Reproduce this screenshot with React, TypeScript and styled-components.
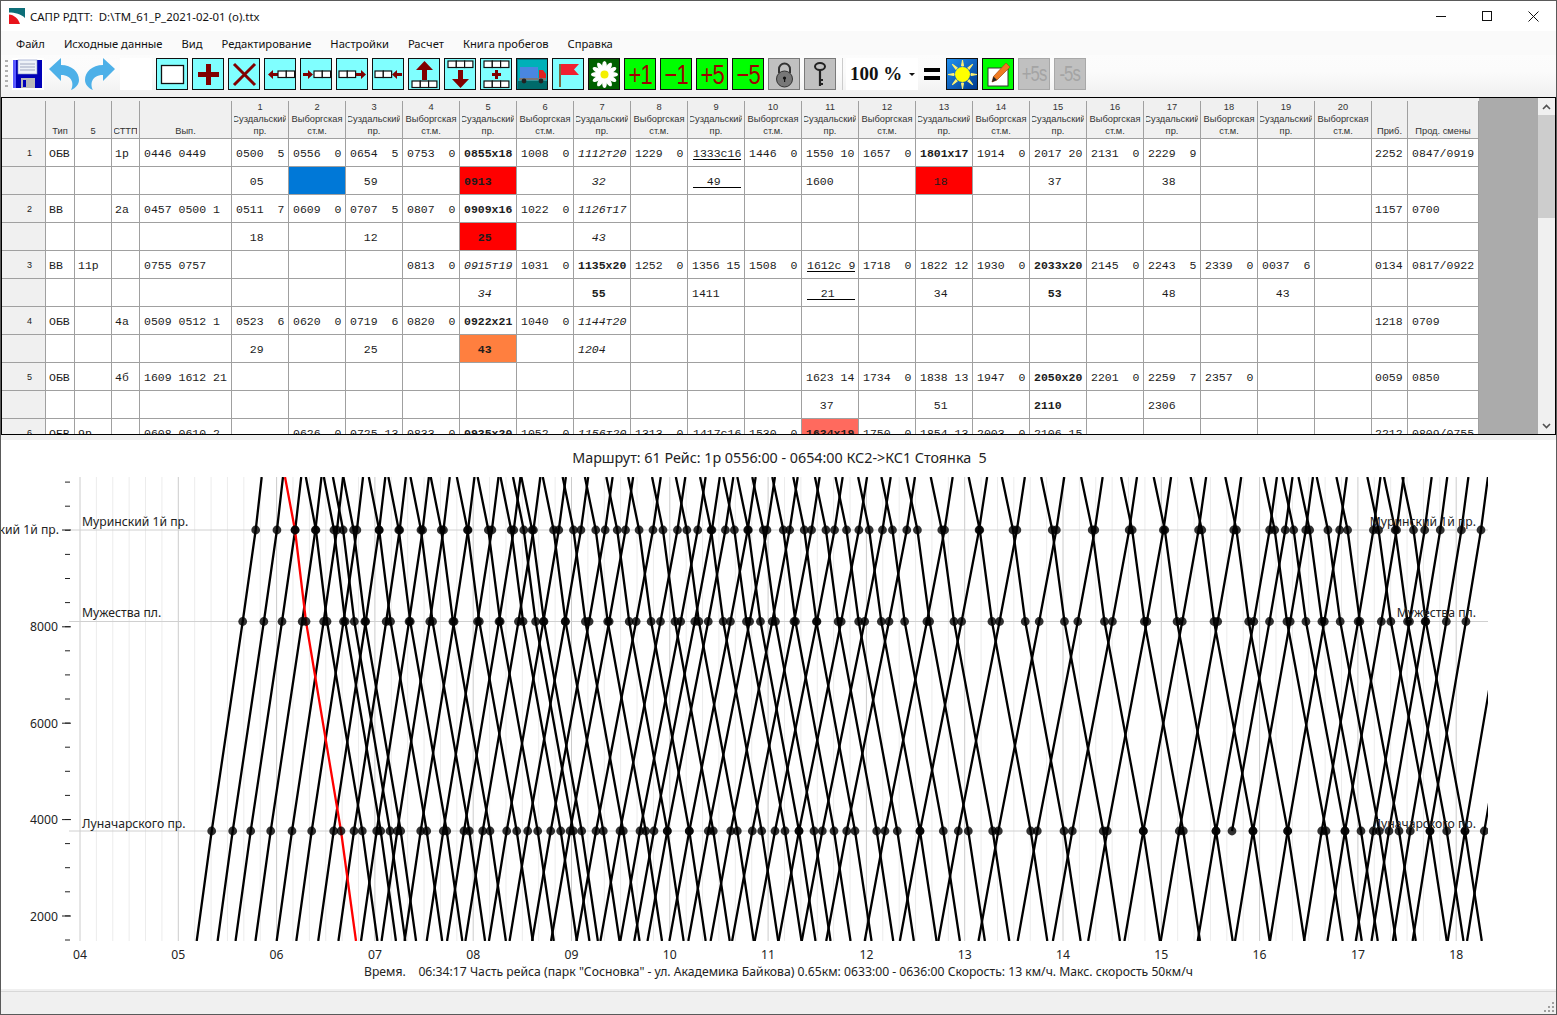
import React from 'react';
import styled, { createGlobalStyle } from 'styled-components';

const Global = createGlobalStyle`
  html, body { margin: 0; padding: 0; background: #fff; overflow: hidden; }
  * { box-sizing: border-box; }
`;
const UI = `"Noto Sans", "Open Sans", sans-serif`;
const Root = styled.div`
  width: 1557px; height: 1015px; border: 1px solid #5a5a5a; display: flex; flex-direction: column;
  background: #fff; font-family: ${UI}; overflow: hidden; color: #111;
`;
const TitleBar = styled.div`height: 30px; display: flex; align-items: center; padding-left: 8px; flex: none; background: #fff;`;
const TitleText = styled.span`font-size: 11.4px; margin-left: 5px; white-space: pre; flex: 1;`;
const WinBtn = styled.div`width: 46px; height: 30px; display: flex; align-items: center; justify-content: center;`;
const MenuBar = styled.div`height: 24px; flex: none; background: #fafafa; display: flex; align-items: center; padding-left: 15px; gap: 19px; font-size: 11.2px;`;
const MenuItem = styled.span`white-space: nowrap;`;
const Toolbar = styled.div`
  height: 42px; flex: none; display: flex; align-items: flex-start; padding: 3px 0 0 4px; gap: 4px;
  background: linear-gradient(#fcfcfc, #fbfbfb 40%, #f0f0f0);
`;
const Grip = styled.div`width: 3px; height: 28px; margin: 2px 0 0 0; background: repeating-linear-gradient(#b0b0b0 0 2px, transparent 2px 5px);`;
const Slot = styled.div<{ $white?: boolean }>`width: 32px; height: 32px; flex: none; background: ${p => (p.$white ? '#fff' : 'transparent')}; display: flex;`;
const ToolBtn = styled.div<{ $bg?: string; $edge?: string; $fg?: string }>`
  width: 32px; height: 32px; flex: none; border: 1.5px solid ${p => p.$edge || '#111'}; background: ${p => p.$bg || '#80ffff'};
  display: flex; align-items: center; justify-content: center; overflow: hidden; color: ${p => p.$fg || '#a00000'};
  font-family: "Liberation Sans", sans-serif;
`;
const BtnLabel = styled.span<{ $size?: number }>`font-size: ${p => p.$size || 25}px; letter-spacing: -1px; display: block; transform: scale(.88, 1.12); white-space: nowrap;`;
const Divider = styled.div`width: 1px; height: 32px; background: #ccc; margin-left: 2px;`;
const Combo = styled.div`
  width: 72px; height: 32px; margin-left: -1px; background: #fff; display: flex; align-items: center; justify-content: space-between; padding: 0 3px 0 4px;
  font: bold 19px "Liberation Serif", serif;
`;
const ComboArrow = styled.span`width: 0; height: 0; border: 3px solid transparent; border-top: 3px solid #111; margin-top: 3px;`;
const EqualSign = styled.div`width: 20px; height: 32px; display: flex; flex-direction: column; justify-content: center; gap: 4px; padding: 0 2px;`;
const EqualBar = styled.div`height: 4px; background: #000;`;
const Frame = styled.div`height: 338px; flex: none; border: 1px solid #000; display: flex; overflow: hidden;`;
const Grid = styled.div`
  flex: 1; height: 336px; background: #ababab; overflow: hidden; display: grid; align-content: start;
  grid-template-columns: 44px 29px 37px 28px 92px repeat(20, 57px) 36px 71px 59px;
  grid-auto-rows: 28px; grid-template-rows: 41px;
`;
const Head = styled.div`
  background: linear-gradient(#a0a0a0, #a0a0a0) no-repeat right bottom / 1px calc(100% - 3px), #f0f0f0;
  border-bottom: 1px solid #a0a0a0; overflow: hidden; padding: 0 3px 1px 2px;
  display: flex; flex-direction: column; justify-content: flex-end; align-items: center;
  font: 9.3px/12px "Liberation Sans", sans-serif; color: #333;
`;
const HeadLine = styled.span`white-space: nowrap; display: flex; justify-content: center; width: 100%; overflow: hidden;`;
const Fill = styled.div`background: #ababab;`;
const RowNo = styled.div`background: #f0f0f0; border-right: 1px solid #a0a0a0; border-bottom: 1px solid #a0a0a0; font: 9px/27px "Liberation Sans", sans-serif; padding: 1px 0 0 25px; color: #222;`;
const Cell = styled.div<{ $bg?: string; $b?: boolean; $i?: boolean; $tight?: boolean }>`
  background: ${p => p.$bg || '#fff'}; border-right: 1px solid #a0a0a0; border-bottom: 1px solid #a0a0a0;
  padding: 1px 0 0 ${p => (p.$tight ? 3 : 4)}px; font-family: "Liberation Mono", monospace; font-size: 11.5px; line-height: 27px; white-space: pre; overflow: hidden;
  font-weight: ${p => (p.$b ? 700 : 400)}; font-style: ${p => (p.$i ? 'italic' : 'normal')}; color: #1c1c1c;
`;
const Under = styled.span`display: block; width: 48px; height: 20px; line-height: 27px; margin-left: 1px; border-bottom: 1px solid #000;`;
const ScrollBar = styled.div`width: 17px; flex: none; background: #f0f0f0; display: flex; flex-direction: column;`;
const ScrollEnd = styled.div`height: 17px; flex: none; display: flex; align-items: center; justify-content: center;`;
const ScrollThumb = styled.div`height: 103px; flex: none; background: #cdcdcd;`;
const ScrollTrack = styled.div`flex: 1;`;
const Splitter = styled.div`height: 5px; flex: none; background: #f0f0f0;`;
const ChartPanel = styled.div`flex: 1; min-height: 0; display: flex; flex-direction: column; background: #fff;`;
const ChartTitle = styled.div`height: 30px; flex: none; padding: 8px 0 0 2px; text-align: center; font-size: 14.3px; line-height: 20px; color: #222; white-space: pre;`;
const ChartSvg = styled.svg`display: block; flex: none;`;
const ChartInfo = styled.div`height: 19px; flex: none; padding: 1px 0 0 363px; font-size: 12.2px; line-height: 18px; white-space: pre; color: #222;`;
const StatusBar = styled.div`height: 23px; flex: none; background: #f0f0f0; border-top: 1px solid #d8d8d8; margin-top: 2px; display: flex; justify-content: flex-end; align-items: flex-end; padding: 0 1px 1px 0; box-shadow: 0 -2px 0 #f0f0f0;`;

type V = string | { t?: string; b?: boolean; i?: boolean; u?: boolean; bg?: string };
const B = (t: string, bg?: string): V => ({ t, b: true, bg });
const I = (t: string): V => ({ t, i: true });
const U = (t: string): V => ({ t, u: true });
const RED = '#ff0000'; const SALMON = '#ff6a5e'; const ORANGE = '#ff7f3f'; const BLUE = '#0078d7';

interface Row { n?: number; type?: string; five?: string; sttp?: string; vyp?: string; c: Record<number, V>; prib?: string; prod?: string }
const rows: Row[] = [
  { n: 1, type: 'ОБВ', sttp: '1р', vyp: '0446 0449', prib: '2252', prod: '0847/0919', c: { 1: '0500  5', 2: '0556  0', 3: '0654  5', 4: '0753  0', 5: B('0855x18'), 6: '1008  0', 7: I('1112т20'), 8: '1229  0', 9: U('1333с16'), 10: '1446  0', 11: '1550 10', 12: '1657  0', 13: B('1801x17'), 14: '1914  0', 15: '2017 20', 16: '2131  0', 17: '2229  9' } },
  { c: { 1: '  05', 2: { bg: BLUE }, 3: '  59', 5: B('0913', RED), 7: I('  32'), 9: U('  49'), 11: '1600', 13: { t: '  18', bg: RED }, 15: '  37', 17: '  38' } },
  { n: 2, type: 'ВВ', sttp: '2а', vyp: '0457 0500 1', prib: '1157', prod: '0700', c: { 1: '0511  7', 2: '0609  0', 3: '0707  5', 4: '0807  0', 5: B('0909x16'), 6: '1022  0', 7: I('1126т17') } },
  { c: { 1: '  18', 3: '  12', 5: B('  25', RED), 7: I('  43') } },
  { n: 3, type: 'ВВ', five: '11р', vyp: '0755 0757', prib: '0134', prod: '0817/0922', c: { 4: '0813  0', 5: I('0915т19'), 6: '1031  0', 7: B('1135x20'), 8: '1252  0', 9: '1356 15', 10: '1508  0', 11: U('1612с 9'), 12: '1718  0', 13: '1822 12', 14: '1930  0', 15: B('2033x20'), 16: '2145  0', 17: '2243  5', 18: '2339  0', 19: '0037  6' } },
  { c: { 5: I('  34'), 7: B('  55'), 9: '1411', 11: U('  21'), 13: '  34', 15: B('  53'), 17: '  48', 19: '  43' } },
  { n: 4, type: 'ОБВ', sttp: '4а', vyp: '0509 0512 1', prib: '1218', prod: '0709', c: { 1: '0523  6', 2: '0620  0', 3: '0719  6', 4: '0820  0', 5: B('0922x21'), 6: '1040  0', 7: I('1144т20') } },
  { c: { 1: '  29', 3: '  25', 5: B('  43', ORANGE), 7: I('1204') } },
  { n: 5, type: 'ОБВ', sttp: '4б', vyp: '1609 1612 21', prib: '0059', prod: '0850', c: { 11: '1623 14', 12: '1734  0', 13: '1838 13', 14: '1947  0', 15: B('2050x20'), 16: '2201  0', 17: '2259  7', 18: '2357  0' } },
  { c: { 11: '  37', 13: '  51', 15: B('2110'), 17: '2306' } },
  { n: 6, type: 'ОБВ', five: '9р', vyp: '0608 0610 2', prib: '2212', prod: '0809/0755', c: { 2: '0626  0', 3: '0725 13', 4: '0833  0', 5: B('0935x20'), 6: '1052  0', 7: I('1156т20'), 8: '1313  0', 9: U('1417с16'), 10: '1530  0', 11: B('1634x19', SALMON), 12: '1750  0', 13: '1854 13', 14: '2003  0', 15: '2106 15' } },
];
const cols20 = Array.from({ length: 20 }, (_, i) => i + 1);

const renderValue = (v: V | undefined, key: string) => {
  if (v === undefined) return <Cell key={key} />;
  if (typeof v === 'string') return <Cell key={key}>{v}</Cell>;
  return <Cell key={key} $bg={v.bg} $b={v.b} $i={v.i}>{v.u ? <Under>{v.t}</Under> : v.t}</Cell>;
};

const Cells = ({ x, y, n = 3 }: { x: number; y: number; n?: number }) => (
  <g>{Array.from({ length: n }, (_, i) => <rect key={i} x={x + i * 8.3} y={y} width={8.3} height={6.5} fill="#fff" stroke="#111" strokeWidth="1.2" />)}</g>
);
const DR = '#800000';
const Ic = ({ children }: { children: React.ReactNode }) => <svg width="29" height="29" viewBox="0 0 29 29">{children}</svg>;
const HArrow = ({ x, dir }: { x: number; dir: 1 | -1 }) => (
  <path fill={DR} d={dir === 1 ? `M${x} 13h5v-3l5 4.5-5 4.5v-3h-5z` : `M${x + 10} 13h-5v-3l-5 4.5 5 4.5v-3h5z`} />
);

const chevronUp = <svg width="9" height="6" viewBox="0 0 9 6"><path d="M1 5 L4.5 1.5 L8 5" fill="none" stroke="#505050" strokeWidth="1.6" /></svg>;
const chevronDown = <svg width="9" height="6" viewBox="0 0 9 6"><path d="M1 1 L4.5 4.5 L8 1" fill="none" stroke="#505050" strokeWidth="1.6" /></svg>;

// x position where each trip crosses Луначарского пр.
const UP = [211.7, 232.7, 250.7, 270.7, 292, 311.7, 333.7, 354, 376.7, 397.3, 420.7, 443.3, 464, 482.7, 506.7, 527.7, 550.7, 570, 596, 620, 640, 654, 667.3, 689.3, 708.3, 730.7, 752.3, 775, 799, 822.3, 846.7, 885, 920, 958.3, 998.3, 1037.3, 1072.3, 1107.3, 1143.3, 1179.3, 1216, 1253, 1287.7, 1321.7, 1345, 1373.3, 1389, 1410.3, 1430, 1465, 1484.3];
const DOWN = [362.3, 380.7, 390, 400.7, 426.7, 446.7, 469.3, 490, 516.7, 537.7, 560.7, 573.3, 581.7, 603.3, 623.3, 645.7, 667.3, 689.3, 713.3, 737.3, 761.7, 785, 799, 814, 834, 855, 876.7, 897.3, 920, 943.3, 968.3, 992.7, 1030.7, 1064, 1103.3, 1143.3, 1183.3, 1216, 1253, 1287.7, 1326, 1345, 1361, 1379.3, 1399, 1430, 1446.7, 1465];
const RED_TRIP = 341;
const DEPOT_TRIP = 1232;
const STATIONS = [530, 621.5, 831];
type Shape = [number, number][];
const upShape: Shape = [[477, 50], [530, 44], [621.5, 31], [831, 0], [941, -15]];
const downShape: Shape = [[477, -56], [530, -46], [621.5, -35], [831, 0], [941, 15]];
// trips take longer during the day, so their lines lean more
const upLean: Shape = [[212, 1], [400, 1.05], [600, 1.3], [830, 1.37], [1060, 1.3], [1290, 1.18], [1488, 1.15]];
const downLean: Shape = [[341, 1], [520, 1.07], [760, 1.1], [1488, 1.12]];
const lean = (x: number, t: Shape) => {
  for (let i = 1; i < t.length; i++) {
    if (x <= t[i][0]) return t[i - 1][1] + ((x - t[i - 1][0]) / (t[i][0] - t[i - 1][0])) * (t[i][1] - t[i - 1][1]);
  }
  return t[t.length - 1][1];
};
const pts = (x: number, s: Shape, t: Shape) => s.map(([y, d]) => `${x + d * lean(x, t)},${y}`).join(' ');
const stopX = (x: number, s: Shape, t: Shape, y: number) => x + (s.find(p => p[0] === y) as [number, number])[1] * lean(x, t);

const hours = Array.from({ length: 15 }, (_, i) => i);
const hx = (h: number) => 80 + h * 98.3;
const minor = Array.from({ length: 85 }, (_, i) => 80 + (i * 98.3) / 6).filter((_, i) => i % 6 !== 0 && 80 + (i * 98.3) / 6 <= 1488);
const ticks = Array.from({ length: 20 }, (_, i) => 940 - i * 24.1);
const DOT = { r: 4.4, fill: '#000', fillOpacity: 0.8 };

const Chart = () => (
  <ChartSvg width={1555} height={492} viewBox="1 470 1555 492">
    <defs><clipPath id="plot"><rect x="80" y="477" width="1408" height="464" /></clipPath></defs>
    {minor.map((x, i) => <line key={i} x1={x} x2={x} y1={477} y2={941} stroke="#ececec" />)}
    {hours.map(h => <line key={h} x1={hx(h)} x2={hx(h)} y1={477} y2={941} stroke="#cccccc" />)}
    {STATIONS.map(y => <line key={y} x1={69} x2={1488} y1={y} y2={y} stroke="#d0d0d0" />)}
    {ticks.map((y, i) => <line key={i} x1={65} x2={70} y1={y} y2={y} stroke="#222" />)}
    {[916, 819.6, 723.2, 626.8, 530].map(y => <line key={y} x1={62} x2={71} y1={y} y2={y} stroke="#222" />)}
    <g clipPath="url(#plot)">
      {UP.map((x, i) => <polyline key={i} points={pts(x, upShape, upLean)} fill="none" stroke="#000" strokeWidth="2.3" />)}
      {DOWN.map((x, i) => <polyline key={i} points={pts(x, downShape, downLean)} fill="none" stroke="#000" strokeWidth="2.3" />)}
      <polyline points={pts(DEPOT_TRIP, upShape.slice(0, 4), upLean)} fill="none" stroke="#000" strokeWidth="2.3" />
      <polyline points={pts(RED_TRIP, downShape, downLean)} fill="none" stroke="#ff0000" strokeWidth="2.3" />
      {STATIONS.map(y => (
        <g key={y}>
          {UP.map((x, i) => <circle key={i} cx={stopX(x, upShape, upLean, y)} cy={y} {...DOT} />)}
          {DOWN.map((x, i) => <circle key={i} cx={stopX(x, downShape, downLean, y)} cy={y} {...DOT} />)}
          <circle cx={stopX(DEPOT_TRIP, upShape, upLean, y)} cy={y} {...DOT} />
          <circle cx={stopX(RED_TRIP, downShape, downLean, y)} cy={y} {...DOT} />
        </g>
      ))}
    </g>
    <g fontFamily={UI} fontSize="12.2" fill="#222">
      {hours.map(h => <text key={h} x={hx(h)} y={959} textAnchor="middle">{String(h + 4).padStart(2, '0')}</text>)}
      {[['2000', 921], ['4000', 824], ['6000', 728], ['8000', 631]].map(([t, y]) => <text key={t} x={58} y={y} textAnchor="end">{t}</text>)}
      <text x={59} y={534} textAnchor="end">Муринский 1й пр.</text>
      <text x={82} y={526}>Муринский 1й пр.</text>
      <text x={82} y={617}>Мужества пл.</text>
      <text x={82} y={828}>Луначарского пр.</text>
      <text x={1476} y={526} textAnchor="end">Муринский 1й пр.</text>
      <text x={1476} y={617} textAnchor="end">Мужества пл.</text>
      <text x={1476} y={828} textAnchor="end">Луначарского пр.</text>
    </g>
  </ChartSvg>
);

const App = () => (
  <>
    <Global />
    <Root>
      <TitleBar>
        <svg width="16" height="16" viewBox="0 0 16 16">
          <rect width="16" height="16" fill="#fff" />
          <path d="M0 0H16V10C12 6 6 4.5 0 4.5Z" fill="#0d6e78" />
          <path d="M0 6.5C5 7 9 10 11 16H0Z" fill="#e8141c" />
        </svg>
        <TitleText>{'САПР РДТТ:  D:\\TM_61_P_2021-02-01 (o).ttx'}</TitleText>
        <WinBtn><svg width="10" height="10" viewBox="0 0 10 10"><path d="M0 5.5H10" stroke="#111" /></svg></WinBtn>
        <WinBtn><svg width="10" height="10" viewBox="0 0 10 10"><rect x=".5" y=".5" width="9" height="9" fill="none" stroke="#111" /></svg></WinBtn>
        <WinBtn><svg width="11" height="11" viewBox="0 0 11 11"><path d="M.5 .5L10.5 10.5M10.5 .5L.5 10.5" stroke="#111" /></svg></WinBtn>
      </TitleBar>
      <MenuBar>
        {['Файл', 'Исходные данные', 'Вид', 'Редактирование', 'Настройки', 'Расчет', 'Книга пробегов', 'Справка'].map(m => <MenuItem key={m}>{m}</MenuItem>)}
      </MenuBar>
      <Toolbar>
        <Grip />
        <Slot $white>
          <svg width="32" height="32" viewBox="0 0 32 32">
            <rect x="1" y="2" width="29" height="28" fill="#0000b8" />
            <rect x="1" y="2" width="3" height="28" fill="#5a5aff" />
            <rect x="6" y="2" width="19" height="14" fill="#eef2f8" stroke="#8090c0" strokeWidth=".6" />
            <path d="M8 6H23M8 9H23M8 12H23" stroke="#a0a8c0" />
            <rect x="9" y="20" width="14" height="10" fill="#b8b8b8" />
            <rect x="11" y="22" width="3" height="7" fill="#0000b8" />
          </svg>
        </Slot>
        <Slot>
          <svg width="32" height="32" viewBox="0 0 32 32"><path d="M1 11 L13 0 L13 7 C24 7 31 14 31 22 C31 26 28 30 23 32 C26 27 25 17 13 17 L13 23Z" fill="#4db0e8" /></svg>
        </Slot>
        <Slot>
          <svg width="32" height="32" viewBox="0 0 32 32"><path d="M31 11 L19 0 L19 7 C8 7 1 14 1 22 C1 26 4 30 9 32 C6 27 7 17 19 17 L19 23Z" fill="#4db0e8" /></svg>
        </Slot>
        <Slot $white />
        <ToolBtn><Ic><rect x="3.5" y="5.5" width="22" height="18" fill="#fff" stroke="#111" strokeWidth="1.3" /></Ic></ToolBtn>
        <ToolBtn><Ic><path d="M12 4h5v8h8v5h-8v8h-5v-8H4v-5h8z" fill={DR} /></Ic></ToolBtn>
        <ToolBtn><Ic><path d="M4 4 L25 25 M25 4 L4 25" stroke={DR} strokeWidth="3" /></Ic></ToolBtn>
        <ToolBtn><Ic><HArrow x={2} dir={-1} /><Cells x={12} y={11} n={2} /></Ic></ToolBtn>
        <ToolBtn><Ic><HArrow x={1} dir={1} /><Cells x={12} y={11} n={2} /></Ic></ToolBtn>
        <ToolBtn><Ic><Cells x={1} y={11} n={2} /><HArrow x={18} dir={1} /></Ic></ToolBtn>
        <ToolBtn><Ic><Cells x={1} y={11} n={2} /><HArrow x={18} dir={-1} /></Ic></ToolBtn>
        <ToolBtn><Ic><path d="M14.5 1 L23 10 H17 V20 H12 V10 H6Z" fill={DR} /><Cells x={2} y={21} /></Ic></ToolBtn>
        <ToolBtn><Ic><Cells x={2} y={1} /><path d="M12 10H17V19H23L14.5 28 L6 19H12Z" fill={DR} /></Ic></ToolBtn>
        <ToolBtn><Ic><Cells x={2} y={1} /><path d="M13 10h3v3h3v3h-3v3h-3v-3h-3v-3h3z" fill={DR} /><Cells x={2} y={21} /></Ic></ToolBtn>
        <ToolBtn $bg="#00808a">
          <svg width="29" height="29" viewBox="0 0 29 29">
            <rect width="29" height="21" fill="#00b0b8" />
            <rect y="21" width="29" height="8" fill="#006a6a" />
            <rect x="2" y="7" width="18" height="12" fill="#4a86e0" />
            <path d="M21 10h4l3 4v5h-7z" fill="#e02020" />
            <rect x="1" y="18" width="27" height="2.5" fill="#777" />
            <circle cx="6" cy="21" r="2.4" fill="#222" /><circle cx="23" cy="21" r="2.4" fill="#222" />
          </svg>
        </ToolBtn>
        <ToolBtn><Ic><rect x="5" y="4" width="2" height="23" fill="#7a6a40" /><path d="M7 4H25L20 9.5 25 15H7Z" fill="#f02030" /></Ic></ToolBtn>
        <ToolBtn $bg="#006000">
          <svg width="29" height="29" viewBox="0 0 29 29">
            {Array.from({ length: 12 }, (_, i) => <ellipse key={i} cx="14.5" cy="6.5" rx="2.4" ry="5.5" fill="#fff" transform={`rotate(${i * 30} 14.5 14.5)`} />)}
            <circle cx="14.5" cy="14.5" r="4" fill="#f4f000" />
          </svg>
        </ToolBtn>
        <ToolBtn $bg="#00ff00"><BtnLabel>+1</BtnLabel></ToolBtn>
        <ToolBtn $bg="#00ff00"><BtnLabel>−1</BtnLabel></ToolBtn>
        <ToolBtn $bg="#00ff00"><BtnLabel>+5</BtnLabel></ToolBtn>
        <ToolBtn $bg="#00ff00"><BtnLabel>−5</BtnLabel></ToolBtn>
        <ToolBtn $bg="#c0c0c0" $edge="#7a7a7a">
          <svg width="29" height="29" viewBox="0 0 29 29">
            <path d="M9 13V9a5.5 5.5 0 0 1 11 0v4" fill="none" stroke="#333" strokeWidth="2" />
            <path d="M14.5 11a8 8 0 0 1 8 8 7.5 7.5 0 0 1-16 0 8 8 0 0 1 8-8z" fill="#777" stroke="#333" />
            <circle cx="14.5" cy="18" r="1.6" fill="#111" /><rect x="14" y="18" width="1.2" height="4" fill="#111" />
          </svg>
        </ToolBtn>
        <ToolBtn $bg="#c0c0c0" $edge="#7a7a7a">
          <svg width="29" height="29" viewBox="0 0 29 29">
            <ellipse cx="14" cy="6.5" rx="5" ry="3.5" fill="none" stroke="#222" strokeWidth="2" />
            <path d="M14 10V26M14 20h3M14 24h3" stroke="#222" strokeWidth="2.2" fill="none" />
          </svg>
        </ToolBtn>
        <Divider />
        <Combo>100 %<ComboArrow /></Combo>
        <EqualSign><EqualBar /><EqualBar /></EqualSign>
        <ToolBtn $bg="linear-gradient(135deg,#2090f0,#003a90)">
          <svg width="29" height="29" viewBox="0 0 29 29">
            {Array.from({ length: 8 }, (_, i) => <path key={i} d="M13.5 6 L14.5 0 L15.5 6Z" fill="#fff070" stroke="#fff070" transform={`rotate(${i * 45} 14.5 14.5)`} />)}
            <circle cx="14.5" cy="14.5" r="7.5" fill="#ffff00" />
          </svg>
        </ToolBtn>
        <ToolBtn $bg="#00ff00">
          <svg width="29" height="29" viewBox="0 0 29 29">
            <rect x="4" y="8" width="20" height="18" fill="#fff" stroke="#333" />
            <path d="M8 22 L9.5 16.5 L22 3 L26 7 L13 20Z" fill="#f07a20" stroke="#a04a10" strokeWidth=".7" />
            <path d="M8 22 L9.5 16.5 L13 20Z" fill="#222" />
          </svg>
        </ToolBtn>
        <ToolBtn $bg="#c0c0c0" $edge="#a8a8a8" $fg="#a4a4a4"><BtnLabel $size={19}>+5s</BtnLabel></ToolBtn>
        <ToolBtn $bg="#c0c0c0" $edge="#a8a8a8" $fg="#a4a4a4"><BtnLabel $size={19}>-5s</BtnLabel></ToolBtn>
      </Toolbar>
      <Frame>
        <Grid>
          <Head />
          <Head><HeadLine>Тип</HeadLine></Head>
          <Head><HeadLine>5</HeadLine></Head>
          <Head><HeadLine>СТТП</HeadLine></Head>
          <Head><HeadLine>Вып.</HeadLine></Head>
          {cols20.map(i => (
            <Head key={i}>
              <HeadLine>{i}</HeadLine>
              <HeadLine>{i % 2 ? 'Суздальский' : 'Выборгская'}</HeadLine>
              <HeadLine>{i % 2 ? 'пр.' : 'ст.м.'}</HeadLine>
            </Head>
          ))}
          <Head><HeadLine>Приб.</HeadLine></Head>
          <Head><HeadLine>Прод. смены</HeadLine></Head>
          <Fill />
          {rows.map((r, ri) => (
            <React.Fragment key={ri}>
              <RowNo>{r.n}</RowNo>
              <Cell $tight>{r.type}</Cell>
              <Cell $tight>{r.five}</Cell>
              <Cell $tight>{r.sttp}</Cell>
              <Cell>{r.vyp}</Cell>
              {cols20.map(i => renderValue(r.c[i], `c${i}`))}
              <Cell $tight>{r.prib}</Cell>
              <Cell>{r.prod}</Cell>
              <Fill />
            </React.Fragment>
          ))}
        </Grid>
        <ScrollBar>
          <ScrollEnd>{chevronUp}</ScrollEnd>
          <ScrollThumb />
          <ScrollTrack />
          <ScrollEnd>{chevronDown}</ScrollEnd>
        </ScrollBar>
      </Frame>
      <Splitter />
      <ChartPanel>
        <ChartTitle>{'Маршрут: 61 Рейс: 1р 0556:00 - 0654:00 КС2->КС1 Стоянка  5'}</ChartTitle>
        <Chart />
        <ChartInfo>{'Время.    06:34:17 Часть рейса (парк "Сосновка" - ул. Академика Байкова) 0.65км: 0633:00 - 0636:00 Скорость: 13 км/ч. Макс. скорость 50км/ч'}</ChartInfo>
      </ChartPanel>
      <StatusBar>
        <svg width="12" height="12" viewBox="0 0 12 12" fill="#a0a0a0">
          <rect x="9" y="1" width="2" height="2" /><rect x="5" y="5" width="2" height="2" /><rect x="9" y="5" width="2" height="2" />
          <rect x="1" y="9" width="2" height="2" /><rect x="5" y="9" width="2" height="2" /><rect x="9" y="9" width="2" height="2" />
        </svg>
      </StatusBar>
    </Root>
  </>
);
export default App;
